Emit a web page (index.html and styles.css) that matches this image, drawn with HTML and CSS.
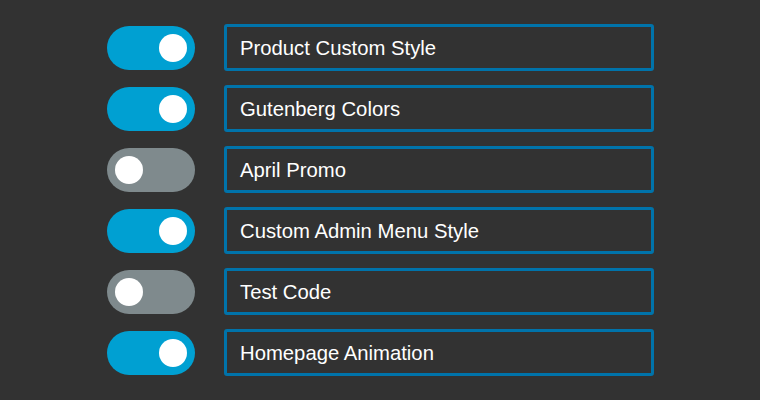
FILE: index.html
```html
<!DOCTYPE html>
<html lang="en">
<head>
  <meta charset="UTF-8">
  <meta name="viewport" content="width=device-width, initial-scale=1.0">
  <title>Snippets</title>
  <link rel="stylesheet" href="styles.css">
</head>
<body>
  <ul class="snippets">
    <li class="snippet"><span class="toggle on"><span class="knob"></span></span><span class="name">Product Custom Style</span></li>
    <li class="snippet"><span class="toggle on"><span class="knob"></span></span><span class="name">Gutenberg Colors</span></li>
    <li class="snippet"><span class="toggle"><span class="knob"></span></span><span class="name">April Promo</span></li>
    <li class="snippet"><span class="toggle on"><span class="knob"></span></span><span class="name">Custom Admin Menu Style</span></li>
    <li class="snippet"><span class="toggle"><span class="knob"></span></span><span class="name">Test Code</span></li>
    <li class="snippet"><span class="toggle on"><span class="knob"></span></span><span class="name">Homepage Animation</span></li>
  </ul>
</body>
</html>
```

FILE: styles.css
```css
body {
  background-color: #323232;
  color: white;
  font-family: 'Liberation Sans', Arial, sans-serif;
  margin: 0;
  height: 400px;
  overflow: hidden;
}
.snippets {
  list-style: none;
  margin: 0;
  padding: 24px 0 0 107px;
  display: flex;
  flex-direction: column;
  gap: 14px;
}
.snippet {
  display: flex;
  align-items: center;
  gap: 29px;
}
.toggle {
  width: 88px;
  height: 44px;
  border-radius: 22px;
  background-color: #7f8a8d;
  display: flex;
  align-items: center;
  padding: 0 8px;
  box-sizing: border-box;
}
.toggle.on {
  background-color: #00a0d2;
  justify-content: flex-end;
}
.knob {
  width: 28px;
  height: 28px;
  border-radius: 50%;
  background-color: white;
}
.name {
  width: 430px;
  height: 47px;
  box-sizing: border-box;
  border: 3px solid #0073aa;
  border-radius: 3px;
  padding: 2px 13px 0;
  display: flex;
  align-items: center;
  font-size: 20.3px;
}
```
